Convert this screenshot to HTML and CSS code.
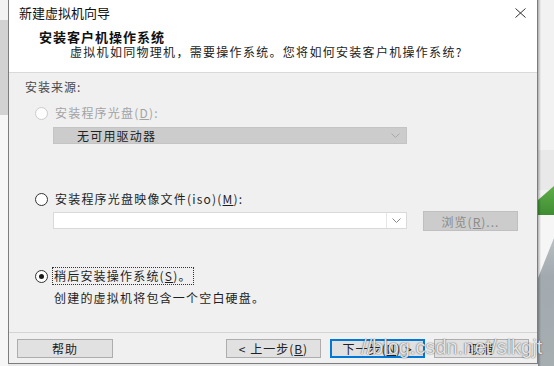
FILE: index.html
```html
<!DOCTYPE html>
<html lang="zh">
<head>
<meta charset="utf-8">
<title>新建虚拟机向导</title>
<link rel="stylesheet" href="styles.css">
</head>
<body>
<div class="screen">
  <div class="bg-left"><div class="band-top"></div><div class="band-mid"></div><div class="band-low"></div></div>
  <div class="dialog-col">
    <div class="dialog">
      <div class="titlebar">
        <span class="title-text">新建虚拟机向导</span>
        <svg class="close" width="11" height="10" viewBox="0 0 11 10"><path d="M0.5 0.5 L10.5 9.5 M10.5 0.5 L0.5 9.5" stroke="#333" stroke-width="1" fill="none"/></svg>
      </div>
      <div class="header">
        <div class="h-title">安装客户机操作系统</div>
        <div class="h-sub">虚拟机如同物理机，需要操作系统。您将如何安装客户机操作系统?</div>
      </div>
      <div class="body">
        <div class="section-label">安装来源:</div>
        <div class="radio-row row-disc disabled">
          <span class="radio"></span><span class="rtext">安装程序光盘(<u>D</u>):</span>
        </div>
        <div class="select disabled-select">
          <span class="sel-text">无可用驱动器</span>
          <svg class="chev" width="9" height="5" viewBox="0 0 9 5"><path d="M0.5 0.5 L4.5 4.5 L8.5 0.5" stroke="#a8a8a8" fill="none"/></svg>
        </div>
        <div class="radio-row row-iso">
          <span class="radio"></span><span class="rtext">安装程序光盘映像文件(iso)(<u>M</u>):</span>
        </div>
        <div class="iso-row">
          <div class="combo">
            <span class="combo-field"></span>
            <span class="combo-btn"><svg width="9" height="5" viewBox="0 0 9 5"><path d="M0.5 0.5 L4.5 4.5 L8.5 0.5" stroke="#8a8a8a" fill="none"/></svg></span>
          </div>
          <div class="browse">浏览(<u>R</u>)...</div>
        </div>
        <div class="radio-row row-later">
          <span class="radio checked"></span><span class="rtext focus">稍后安装操作系统(<u>S</u>)。</span>
        </div>
        <div class="desc">创建的虚拟机将包含一个空白硬盘。</div>
      </div>
      <div class="footer">
        <div class="btn btn-help">帮助</div>
        <div class="btn-group">
          <div class="btn">&lt; 上一步(<u>B</u>)</div>
          <div class="btn btn-default">下一步(<u>N</u>) &gt;</div>
          <div class="btn">取消</div>
        </div>
      </div>
    </div>
    <div class="bottom-strip"></div>
  </div>
  <div class="bg-right">
    <svg width="16" height="366" viewBox="0 0 16 366">
      <defs>
        <linearGradient id="g" x1="0" y1="0" x2="0" y2="1">
          <stop offset="0" stop-color="#5fae48"/>
          <stop offset="1" stop-color="#3f8d33"/>
        </linearGradient>
        <linearGradient id="gr" x1="0" y1="0" x2="0" y2="1">
          <stop offset="0" stop-color="#b9bfc3"/>
          <stop offset="0.3" stop-color="#a2aaaf"/>
          <stop offset="1" stop-color="#a7aeb2"/>
        </linearGradient>
        <linearGradient id="sh" x1="0" y1="0" x2="1" y2="0">
          <stop offset="0" stop-color="#000" stop-opacity="0.28"/>
          <stop offset="1" stop-color="#000" stop-opacity="0"/>
        </linearGradient>
      </defs>
      <rect x="0" y="0" width="16" height="366" fill="#f2f2f2"/>
      <rect x="0" y="150" width="16" height="40" fill="#e9e9e9"/>
      <polygon points="0,200 16,186 16,215 0,215" fill="url(#g)"/>
      <rect x="0" y="215" width="16" height="70" fill="#f6f6f6"/>
      <polygon points="0,278 16,238 16,366 0,366" fill="url(#gr)"/>
      <rect x="0" y="0" width="3" height="366" fill="url(#sh)"/>
    </svg>
  </div>
  <div class="watermark">//blog.csdn.net/slkgjt</div>
</div>
</body>
</html>
```
FILE: styles.css
```css
* { box-sizing: border-box; }
html, body { margin: 0; padding: 0; }
body {
  width: 554px;
  height: 366px;
  overflow: hidden;
  background: #f2f2f2;
  font-family: "Noto Sans CJK SC", "Liberation Sans", sans-serif;
  font-size: 12px;
  color: #1e1e1e;
}
u { text-decoration: underline; text-underline-offset: 1px; }

.screen {
  position: relative;
  width: 554px;
  height: 366px;
  display: flex;
}

.bg-left {
  width: 8px;
  height: 366px;
  display: flex;
  flex-direction: column;
}
.band-top { height: 20px; background: #f3f3f3; }
.band-mid { height: 95px; background: #d2d2d2; }
.band-low { flex: 1; background: #f6f6f6; }

.dialog-col {
  width: 530px;
  display: flex;
  flex-direction: column;
}
.bottom-strip { flex: 1; background: #e9e9e9; }

.dialog {
  height: 364px;
  width: 530px;
  background: #ffffff;
  border-left: 1px solid #7d7d7d;
  border-right: 1px solid #7d7d7d;
  border-bottom: 1px solid #7d7d7d;
  display: flex;
  flex-direction: column;
}

.titlebar {
  height: 26px;
  display: flex;
  align-items: center;
  justify-content: space-between;
  padding: 0 11px 0 10px;
}
.title-text {
  font-size: 13px;
  line-height: 16px;
  color: #111;
}
.close { display: block; margin-top: 0; }

.header {
  height: 47px;
  border-bottom: 1px solid #d9d9d9;
  padding-left: 30px;
  display: flex;
  flex-direction: column;
}
.h-title {
  margin-top: 3px;
  line-height: 15px;
  font-size: 13px;
  font-weight: bold;
  letter-spacing: 1px;
  color: #111;
}
.h-sub {
  line-height: 16px;
  padding-left: 31px;
  letter-spacing: 1.3px;
  color: #222;
}

.body {
  flex: 1;
  background: #f0f0f0;
  padding-top: 6px;
  display: flex;
  flex-direction: column;
}
.section-label {
  margin-left: 16px;
  line-height: 16px;
  letter-spacing: 1px;
  color: #4a4a4a;
}

.radio-row {
  display: flex;
  align-items: center;
  height: 16px;
  margin-left: 26px;
}
.row-disc { margin-top: 10px; }
.row-iso { margin-top: 47px; }
.row-later { margin-top: 37px; }

.radio {
  width: 13px;
  height: 13px;
  border-radius: 50%;
  border: 1px solid #333;
  background: #fff;
  margin-right: 7px;
  position: relative;
  flex: none;
}
.disabled .radio { border-color: #cccccc; background: #fdfdfd; }
.radio.checked::after {
  content: "";
  position: absolute;
  left: 3px;
  top: 3px;
  width: 5px;
  height: 5px;
  border-radius: 50%;
  background: #1a1a1a;
}
.rtext {
  line-height: 16px;
  letter-spacing: 1.2px;
  color: #1e1e1e;
}
.disabled .rtext { color: #a3a3a3; }
.rtext.focus {
  outline: 1px dotted #333;
  outline-offset: 0;
  padding: 0 1px 0 1px;
  margin-left: -2px;
}

.select {
  margin-top: 6px;
  margin-left: 44px;
  width: 354px;
  height: 17px;
  display: flex;
  align-items: center;
  justify-content: space-between;
}
.disabled-select {
  background: #cccccc;
  border: 1px solid #c4c4c4;
  padding: 0 6px 0 23px;
}
.sel-text { letter-spacing: 1.2px; color: #222; line-height: 15px; }

.iso-row {
  margin-top: 4px;
  margin-left: 44px;
  height: 20px;
  display: flex;
  align-items: flex-start;
}
.combo {
  margin-top: 1px;
  width: 354px;
  height: 17px;
  background: #fff;
  border: 1px solid #d9d9d9;
  display: flex;
}
.combo-field { flex: 1; }
.combo-btn {
  width: 20px;
  border-left: 1px solid #e6e6e6;
  display: flex;
  align-items: center;
  justify-content: center;
}
.browse {
  margin-left: 16px;
  width: 95px;
  height: 20px;
  background: #cccccc;
  border: 1px solid #bfbfbf;
  display: flex;
  align-items: center;
  justify-content: center;
  color: #8a8a8a;
  letter-spacing: 1px;
}

.desc {
  margin-top: 6px;
  margin-left: 45px;
  line-height: 16px;
  letter-spacing: 1.2px;
  color: #1e1e1e;
}

.footer {
  height: 31px;
  border-top: 1px solid #d4d4d4;
  background: #f0f0f0;
  padding: 6px 8px 0 8px;
  display: flex;
  justify-content: space-between;
  align-items: flex-start;
}
.btn-group { display: flex; gap: 9px; }
.btn {
  width: 95px;
  height: 19px;
  background: #e1e1e1;
  border: 1px solid #adadad;
  display: flex;
  align-items: center;
  justify-content: center;
  letter-spacing: 1px;
  color: #222;
}
.btn-help { width: 96px; }
.btn-default { border: 1px solid #0078d7; box-shadow: inset 0 0 0 1px #0078d7; }

.bg-right {
  width: 16px;
  height: 366px;
}
.bg-right svg { display: block; }

.watermark {
  position: absolute;
  left: 361px;
  top: 335px;
  font-family: "Liberation Sans", Arial, sans-serif;
  font-size: 20px;
  line-height: 24px;
  color: rgba(255, 255, 255, 0.85);
  text-shadow: 0 0 1px rgba(0, 0, 0, 0.6), 0 0 2px rgba(0, 0, 0, 0.3);
  white-space: nowrap;
  pointer-events: none;
}
```
